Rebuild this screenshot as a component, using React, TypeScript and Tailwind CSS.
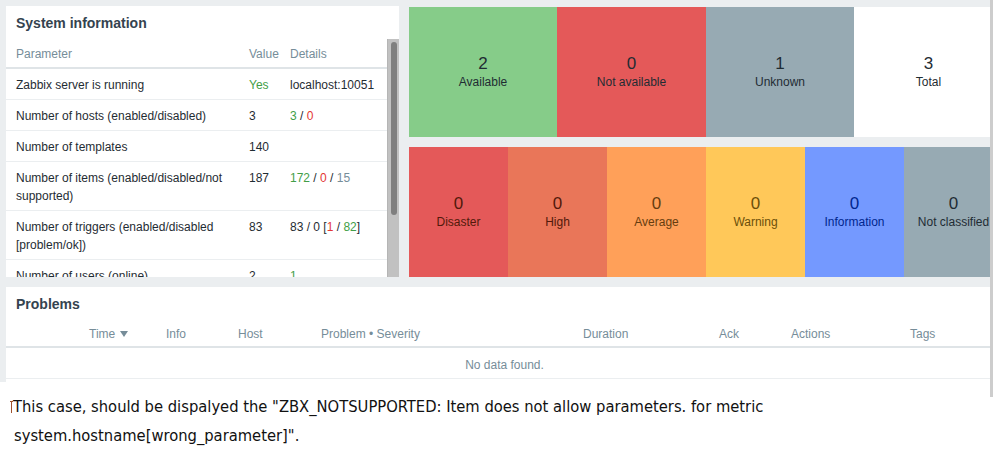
import React from "react";

const green = "text-[#429e47]";
const red = "text-[#e33734]";
const grey = "text-[#768d99]";

function SystemInfo() {
  const rows: { p: string; v: string; d: React.ReactNode; vc?: string }[] = [
    { p: "Zabbix server is running", v: "Yes", vc: green, d: "localhost:10051" },
    {
      p: "Number of hosts (enabled/disabled)",
      v: "3",
      d: (
        <>
          <span className={green}>3</span> / <span className={red}>0</span>
        </>
      ),
    },
    { p: "Number of templates", v: "140", d: "" },
    {
      p: "Number of items (enabled/disabled/not supported)",
      v: "187",
      d: (
        <>
          <span className={green}>172</span> / <span className={red}>0</span> /{" "}
          <span className={grey}>15</span>
        </>
      ),
    },
    {
      p: "Number of triggers (enabled/disabled [problem/ok])",
      v: "83",
      d: (
        <>
          83 / 0 [<span className={red}>1</span> / <span className={green}>82</span>]
        </>
      ),
    },
    {
      p: "Number of users (online)",
      v: "2",
      d: <span className={green}>1</span>,
    },
  ];
  return (
    <div className="w-[393px] h-[271px] bg-white flex flex-col shrink-0">
      <div className="h-[33px] shrink-0 px-[10px] pt-[2px] flex items-center text-[14px] font-bold text-[#34434f]">
        System information
      </div>
      <div className="flex flex-1 min-h-0">
        <div className="flex-1 overflow-hidden">
          <table className="w-full border-collapse table-fixed">
            <colgroup>
              <col className="w-[243px]" />
              <col className="w-[41px]" />
              <col />
            </colgroup>
            <thead>
              <tr className="border-b-2 border-[#dfe4e7]">
                <th className="h-[29px] pt-[2px] pl-[10px] text-left font-normal text-[#768d99]">Parameter</th>
                <th className="h-[29px] pt-[2px] text-left font-normal text-[#768d99]">Value</th>
                <th className="h-[29px] pt-[2px] text-left font-normal text-[#768d99]">Details</th>
              </tr>
            </thead>
            <tbody>
              {rows.map((r, i) => (
                <tr key={i} className="border-b border-[#ebeef0]">
                  <td className="align-top pt-[7px] pb-[5px] leading-[18px] pl-[10px] pr-[6px]">{r.p}</td>
                  <td className={`align-top pt-[7px] pb-[5px] leading-[18px] ${r.vc ?? ""}`}>{r.v}</td>
                  <td className="align-top pt-[7px] pb-[5px] leading-[18px] whitespace-nowrap">{r.d}</td>
                </tr>
              ))}
            </tbody>
          </table>
        </div>
        <div className="w-[12px] shrink-0 bg-[#c1c1c1] border-l border-[#b5b5b5] flex flex-col items-center">
          <div className="mt-[3px] w-[6px] h-[173px] rounded-full bg-[#7f7f7f]" />
        </div>
      </div>
    </div>
  );
}

function Cell({
  n,
  label,
  bg,
  fg,
  w,
}: {
  n: string;
  label: string;
  bg: string;
  fg: string;
  w: string;
}) {
  return (
    <div className={`${w} ${bg} ${fg} shrink-0 h-full flex flex-col items-center justify-center pb-[1px]`}>
      <div className="text-[17px] leading-[20px]">{n}</div>
      <div className="text-[12px] leading-[16px] whitespace-nowrap">{label}</div>
    </div>
  );
}

function HostAvail() {
  return (
    <div className="h-[130px] bg-white flex overflow-hidden">
      <Cell n="2" label="Available" bg="bg-[#86cc89]" fg="text-[#1f2c33]" w="w-[148px]" />
      <Cell n="0" label="Not available" bg="bg-[#e45959]" fg="text-[#1f2c33]" w="w-[149px]" />
      <Cell n="1" label="Unknown" bg="bg-[#97aab3]" fg="text-[#1f2c33]" w="w-[148px]" />
      <Cell n="3" label="Total" bg="bg-white" fg="text-[#1f2c33]" w="w-[149px]" />
    </div>
  );
}

function Triggers() {
  return (
    <div className="h-[130px] bg-white flex overflow-hidden">
      <Cell n="0" label="Disaster" bg="bg-[#e45959]" fg="text-[#52190b]" w="w-[99px]" />
      <Cell n="0" label="High" bg="bg-[#e97659]" fg="text-[#52190b]" w="w-[99px]" />
      <Cell n="0" label="Average" bg="bg-[#ffa059]" fg="text-[#663d0f]" w="w-[99px]" />
      <Cell n="0" label="Warning" bg="bg-[#ffc859]" fg="text-[#6b4f0a]" w="w-[99px]" />
      <Cell n="0" label="Information" bg="bg-[#7499ff]" fg="text-[#00268e]" w="w-[99px]" />
      <Cell n="0" label="Not classified" bg="bg-[#97aab3]" fg="text-[#1f2c33]" w="w-[99px]" />
    </div>
  );
}

function Problems() {
  return (
    <div className="w-[984px] h-[95px] bg-white flex flex-col overflow-hidden">
      <div className="h-[33px] shrink-0 px-[10px] pt-[2px] flex items-center text-[14px] font-bold text-[#34434f]">
        Problems
      </div>
      <div className="h-[28px] shrink-0 flex items-center pt-[1px] border-b-2 border-[#dfe4e7] text-[#768d99]">
        <div className="w-[83px] shrink-0" />
        <div className="w-[77px] shrink-0 flex items-center gap-[5px]">
          <span>Time</span>
          <svg width="8" height="6" viewBox="0 0 8 6">
            <path d="M0 0 L8 0 L4 6 Z" fill="#768d99" />
          </svg>
        </div>
        <div className="w-[72px] shrink-0">Info</div>
        <div className="w-[83px] shrink-0">Host</div>
        <div className="w-[262px] shrink-0">Problem • Severity</div>
        <div className="w-[136px] shrink-0">Duration</div>
        <div className="w-[72px] shrink-0">Ack</div>
        <div className="w-[119px] shrink-0">Actions</div>
        <div className="flex-1">Tags</div>
      </div>
      <div className="h-[31px] shrink-0 border-b border-[#ebeef0] flex items-center justify-center pl-[13px] pt-[3px] text-[#768d99]">
        No data found.
      </div>
    </div>
  );
}

export default function App() {
  return (
    <div className="w-[993px] h-[467px] overflow-hidden bg-white font-['Liberation_Sans',Arial,sans-serif] text-[12px] text-[#1f2c33]">
      <div className="flex items-start">
        <div className="w-[990px] h-[382px] shrink-0 bg-[#ebeef0] pl-[6px] pt-[6px] flex flex-col gap-[10px]">
          <div className="flex gap-[10px] h-[271px] shrink-0">
            <SystemInfo />
            <div className="flex flex-col gap-[10px] pt-[1px] w-[581px] overflow-hidden">
              <HostAvail />
              <Triggers />
            </div>
          </div>
          <Problems />
        </div>
        <div className="w-[3px] h-[397px] shrink-0 bg-[#cdcdcd]" />
      </div>
      <div className="font-['DejaVu_Sans_Condensed','DejaVu_Sans',sans-serif] text-[16.4px] text-[#111]">
        <div className="h-[20px] leading-[20px] pl-[10px] flex items-center">
          <svg width="3" height="12" viewBox="0 0 3 12" className="shrink-0">
            <path d="M0 0.5 H3 M1.5 0 V12" stroke="#a0522d" strokeWidth="1" />
          </svg>
          <span>This case, should be dispalyed the "ZBX_NOTSUPPORTED: Item does not allow parameters. for metric</span>
        </div>
        <div className="mt-[9px] h-[20px] leading-[20px] pl-[14px]">system.hostname[wrong_parameter]".</div>
      </div>
    </div>
  );
}
